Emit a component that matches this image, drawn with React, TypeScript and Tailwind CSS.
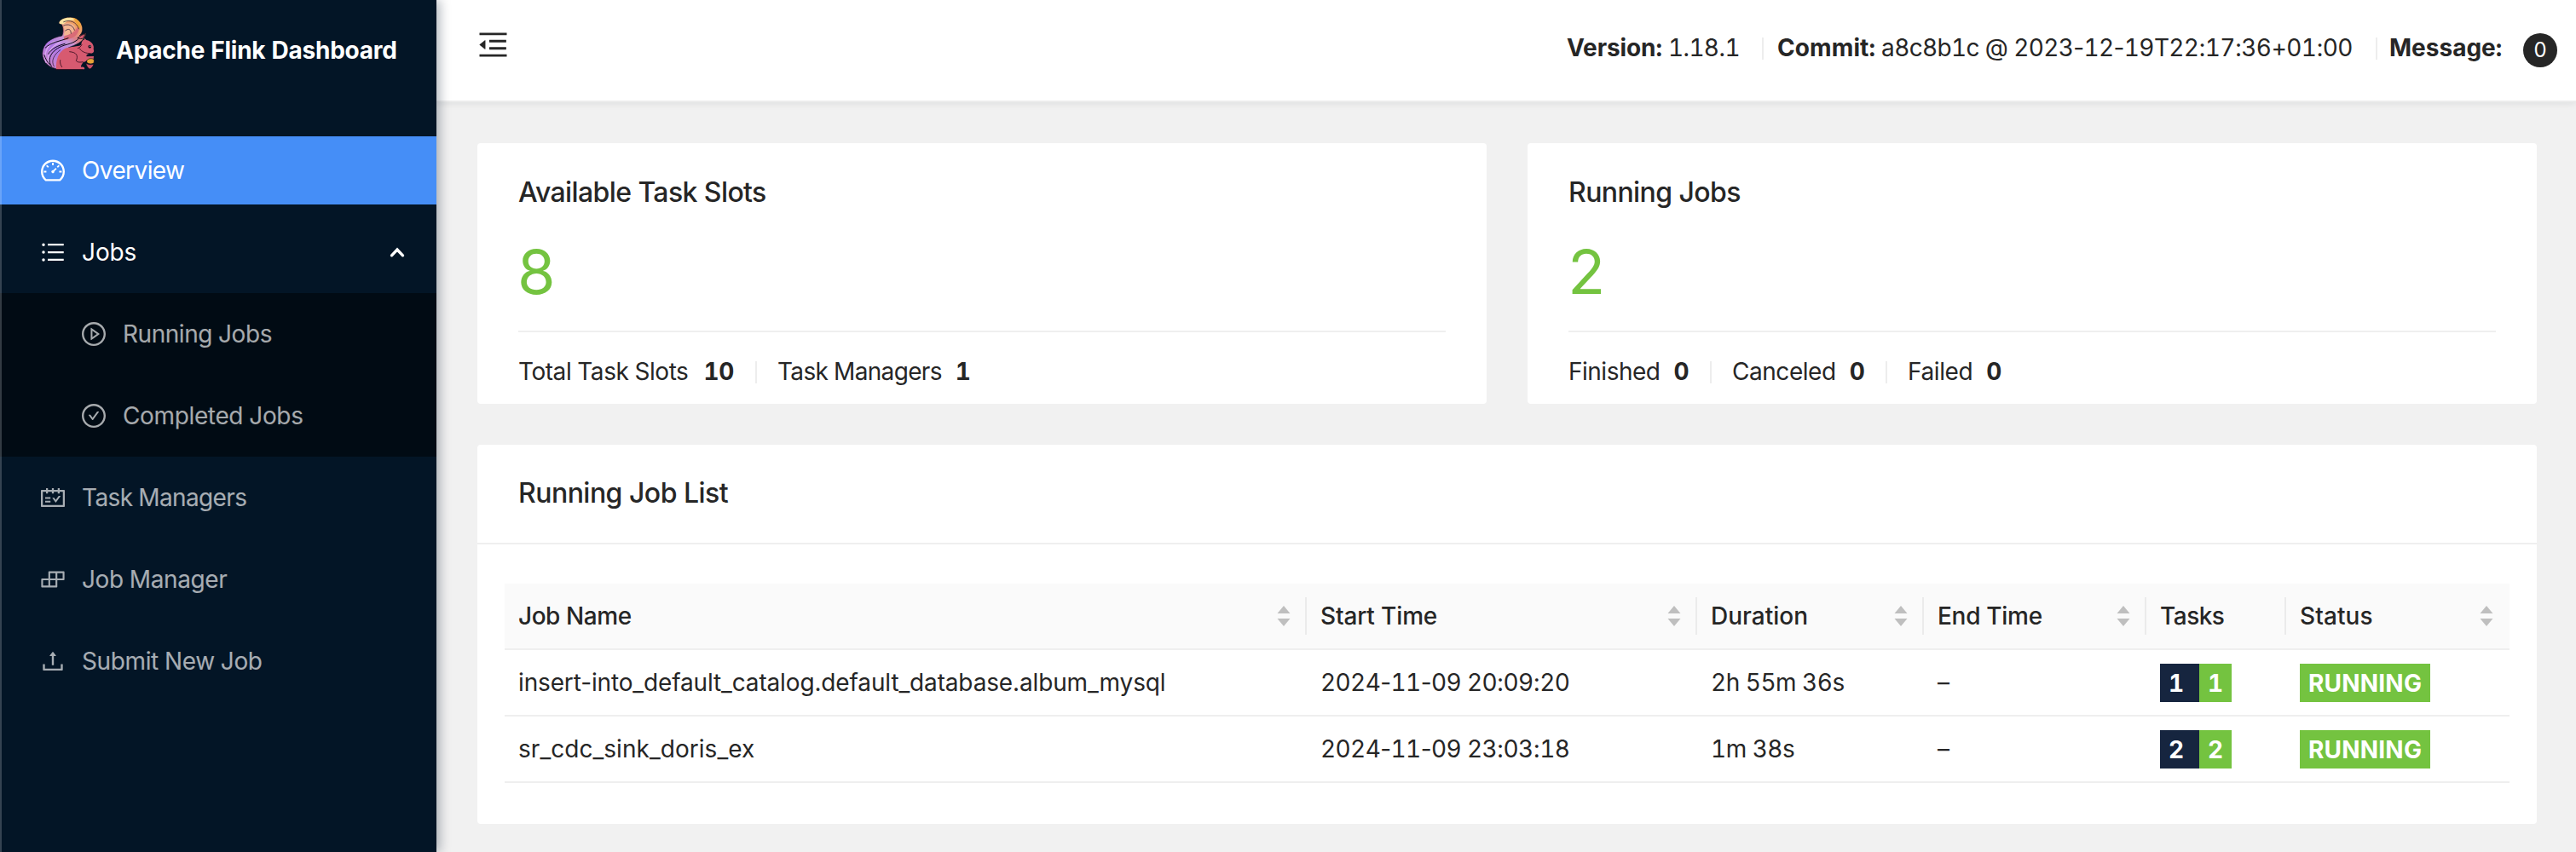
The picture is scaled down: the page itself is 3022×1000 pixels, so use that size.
import type { ComponentType, ReactNode } from "react";
import {
  AiOutlineBars,
  AiOutlineBuild,
  AiOutlineCheckCircle,
  AiOutlineDashboard,
  AiOutlineMenuFold,
  AiOutlinePlayCircle,
  AiOutlineSchedule,
  AiOutlineUpload,
} from "react-icons/ai";

type Icon = ComponentType<{ size?: number; className?: string }>;

/* Digits stay tabular while punctuation keeps its natural width. */
function Digits({ children }: { children: string }) {
  return (
    <>
      {children.split(/([-:.+]+)/).map((part, i) =>
        i % 2 ? (
          <span key={i} className="normal-nums">
            {part}
          </span>
        ) : (
          part
        ),
      )}
    </>
  );
}

function Squirrel() {
  return (
    <svg viewBox="54 24 192 198" className="h-[66px] w-16 shrink-0" fill="none" strokeLinecap="round" strokeLinejoin="round">
      <defs>
        <linearGradient id="tail" x1="190" y1="30" x2="75" y2="190" gradientUnits="userSpaceOnUse">
          <stop offset="0" stopColor="#eda43c" />
          <stop offset="0.2" stopColor="#f0a070" />
          <stop offset="0.36" stopColor="#dc7f88" />
          <stop offset="0.48" stopColor="#c595d8" />
          <stop offset="0.7" stopColor="#ae78e6" />
          <stop offset="1" stopColor="#c984d0" />
        </linearGradient>
      </defs>
      <path
        d="M118 52C118 44 126 38 135 35C165 24 192 36 199 62C203 76 198 88 190 95L213 86C208 112 188 124 160 134C135 143 118 165 120 214C82 211 59 188 59 158C60 122 90 103 128 96C134 84 133 68 126 54Z"
        fill="url(#tail)"
        stroke="#0c0a18"
        strokeWidth="2"
      />
      <path d="M118 52C120 38 140 30 165 33C177 35 184 42 181 46C165 38 148 41 138 52C132 57 124 57 118 52Z" fill="#fae3a0" />
      <path d="M165 32C180 34 190 46 195 62L186 75C181 58 178 45 165 32Z" fill="#eea33a" />
      <path d="M134 96C138 84 138 68 130 56C150 48 168 52 174 66C172 84 156 94 134 96Z" fill="#f3b592" />
      <path d="M136 98C160 92 176 82 182 64L188 76C182 98 162 108 134 112Z" fill="#d96b76" />
      <path d="M72 190C62 160 76 128 102 116M82 196C72 164 88 132 122 120" stroke="#d6a8ee" strokeWidth="4" />
      <path
        d="M92 204C72 180 90 140 148 126C172 120 186 110 194 96M80 160C92 140 112 132 138 124M70 138C90 118 120 116 150 104M66 164C70 178 76 188 86 198"
        stroke="#0c0a18"
        strokeWidth="3"
      />
      <path d="M134 60C152 52 168 60 172 76M140 78C152 68 160 74 160 88M134 47C156 37 180 48 188 72M100 204C88 184 100 162 122 146" stroke="#2a1430" strokeWidth="2.2" />
      <path
        d="M108 214C106 180 116 152 140 140C160 133 184 134 196 128C196 118 200 111 206 110L208 105L214 111C232 114 243 130 239 143C243 152 238 158 226 158C216 160 212 165 215 169L240 168L239 177L222 180C214 184 208 188 202 190C198 198 193 203 196 206C204 204 210 208 207 214Z"
        fill="#d75a70"
      />
      <path d="M155 152C180 154 186 166 178 184C182 190 192 190 202 188M190 141C198 153 212 158 228 158M198 128C194 134 190 138 184 140M122 182C120 192 124 200 128 206M108 215H200" stroke="#3a0f20" strokeWidth="2.6" />
      <path d="M184 103C194 95 202 92 210 88L204 104C198 108 190 108 184 103Z" fill="#d75a70" stroke="#0c0a18" strokeWidth="2.4" />
      <circle cx="226" cy="134" r="5.5" fill="#180d1a" />
      <circle cx="227.500" cy="132.500" r="1.800" fill="#fff" />
      <path d="M216 182C222 174 236 175 241 180V190C236 196 222 197 216 190Z" fill="#e9a537" stroke="#0c0a18" strokeWidth="2" />
      <path d="M212 192C220 198 232 199 240 195C237 206 230 213 225 213C220 211 214 202 212 192Z" fill="#c94f66" stroke="#0c0a18" strokeWidth="2" />
    </svg>
  );
}

function NavItem({ icon: I, label, active, open, sub, ls }: { icon: Icon; label: string; active?: boolean; open?: boolean; sub?: boolean; ls: string }) {
  return (
    <a
      className={`flex h-20 items-center ${sub ? "pl-[94px]" : "pl-[46px]"} ${active ? "bg-[#458ef7] text-white" : open ? "text-white" : "text-white/65"}`}
    >
      <I size={32} className="shrink-0" />
      <span className={`ml-[18px] ${ls}`}>{label}</span>
      {open && (
        <svg viewBox="0 0 20 14" className="mr-9 ml-auto h-3.5 w-5" fill="none" stroke="currentColor" strokeWidth="3.4" strokeLinecap="round">
          <path d="M3.500 10.800L10 4L16.500 10.800" />
        </svg>
      )}
    </a>
  );
}

function Divider() {
  return <span className="mt-0.5 h-[26px] w-0.5 shrink-0 bg-[#ededed]" />;
}

function Stat({ label, value, width, ls, gap }: { label: string; value: string; width: string; ls: string; gap: string }) {
  return (
    <div className={`flex items-center whitespace-nowrap ${width} ${gap}`}>
      <span className={ls}>{label}</span>
      <b className="font-bold tracking-[-0.3px]">{value}</b>
    </div>
  );
}

function SummaryCard({ title, value, children }: { title: string; value: string; children: ReactNode }) {
  return (
    <section className="h-[306px] flex-1 rounded bg-white px-12">
      <h2 className="pt-9 text-[32px]/[44px] font-medium tracking-[-0.6px]">{title}</h2>
      <div className="mt-[33px] -ml-0.5 text-[72px]/[76px] text-[#74c340]">{value}</div>
      <div className="mt-[31px] flex items-center border-t-2 border-[#efefef] pt-[27px] leading-[38px]">{children}</div>
    </section>
  );
}

function Sorter({ className }: { className: string }) {
  return (
    <svg viewBox="0 0 16 24" className={`ml-auto h-6 w-4 ${className}`} fill="#bfbfbf">
      <path d="M8 0L15.500 9H0.500ZM8 24L15.500 15H0.500Z" />
    </svg>
  );
}

const columns = [
  { label: "Job Name", ls: "tracking-[-0.45px]", sort: true, line: true },
  { label: "Start Time", ls: "tracking-[-0.15px]", sort: true, line: true },
  { label: "Duration", ls: "tracking-[0px]", sort: true, line: true },
  { label: "End Time", ls: "tracking-[-0.3px]", sort: true, line: true },
  { label: "Tasks", ls: "tracking-[-0.5px]", sort: false, line: true },
  { label: "Status", ls: "tracking-[0.1px]", sort: true, line: false },
];

const jobs = [
  { name: "insert-into_default_catalog.default_database.album_mysql", ls: "tracking-[-0.14px]", start: "2024-11-09 20:09:20", duration: "2h 55m 36s", tasks: "1" },
  { name: "sr_cdc_sink_doris_ex", ls: "tracking-[0.04px]", start: "2024-11-09 23:03:18", duration: "1m 38s", tasks: "2" },
];

const grid = "grid grid-cols-[941px_458px_266px_261px_164px_262px] items-center";

export default function App() {
  return (
    <div className="flex h-[1000px] w-[3022px] overflow-hidden bg-[#f1f1f1] font-[Inter,sans-serif] text-[28px] leading-[44px] text-[#262626] tabular-nums">
      <aside className="relative z-20 w-[512px] shrink-0 bg-[#031526] shadow-[4px_0_12px_rgba(0,21,41,0.3)]">
        <div className="flex h-[120px] pl-12">
          <div className="pt-[18px]">
            <Squirrel />
          </div>
          <h1 className="ml-6 pt-[37px] leading-[44px] font-bold tracking-[-0.26px] whitespace-nowrap text-white">Apache Flink Dashboard</h1>
        </div>
        <nav className="mt-10 flex flex-col gap-4">
          <NavItem icon={AiOutlineDashboard} label="Overview" ls="tracking-[-0.6px]" active />
          <div className="flex flex-col">
            <NavItem icon={AiOutlineBars} label="Jobs" ls="tracking-[-0.1px]" open />
            <div className="mt-2 flex flex-col gap-4 bg-[#010b14] py-2">
              <NavItem icon={AiOutlinePlayCircle} label="Running Jobs" ls="tracking-[-0.45px]" sub />
              <NavItem icon={AiOutlineCheckCircle} label="Completed Jobs" ls="tracking-[-0.36px]" sub />
            </div>
          </div>
          <div className="-mt-2 flex flex-col gap-4">
            <NavItem icon={AiOutlineSchedule} label="Task Managers" ls="tracking-[-0.63px]" />
            <NavItem icon={AiOutlineBuild} label="Job Manager" ls="tracking-[-0.4px]" />
            <NavItem icon={AiOutlineUpload} label="Submit New Job" ls="tracking-[-0.38px]" />
          </div>
        </nav>
        <div className="absolute inset-y-0 left-0 w-0.5 bg-white/20" />
      </aside>

      <div className="flex min-w-0 flex-1 flex-col">
        <header className="relative z-10 flex h-[120px] shrink-0 border-b-2 border-[#ececec] bg-white pl-[46px] shadow-[0_2px_8px_rgba(0,21,41,0.08)]">
          <AiOutlineMenuFold size={41} className="mt-8 shrink-0" />
          <div className="mr-[22px] ml-auto flex h-20 items-center pt-8 whitespace-nowrap">
            <div className="w-[229px]">
              <strong className="font-bold tracking-[-0.1px]">Version:</strong>
              <span className="ml-[7px] tracking-[-0.8px]">
                <Digits>1.18.1</Digits>
              </span>
            </div>
            <Divider />
            <div className="w-[718px] pl-4">
              <strong className="font-bold tracking-[0.1px]">Commit:</strong>
              <span className="ml-[7px] tracking-[-0.63px]">
                <Digits>a8c8b1c @ 2023-12-19T22:17:36+01:00</Digits>
              </span>
            </div>
            <Divider />
            <div className="flex w-[211px] items-center pl-3.5">
              <strong className="font-bold">Message:</strong>
              <span className="mt-1.5 ml-auto flex size-10 items-center justify-center rounded-full bg-[#262626] text-2xl leading-none text-white">0</span>
            </div>
          </div>
        </header>

        <main className="flex flex-1 flex-col gap-12 p-12 pr-[46px]">
          <div className="flex gap-12">
            <SummaryCard title="Available Task Slots" value="8">
              <Stat label="Total Task Slots" value="10" width="w-[278px]" ls="tracking-[-0.45px]" gap="gap-[18px]" />
              <Divider />
              <div className="w-6" />
              <Stat label="Task Managers" value="1" width="w-auto" ls="tracking-[-0.67px]" gap="gap-4" />
            </SummaryCard>
            <SummaryCard title="Running Jobs" value="2">
              <Stat label="Finished" value="0" width="w-[166px]" ls="tracking-[-0.5px]" gap="gap-4" />
              <Divider />
              <div className="w-6" />
              <Stat label="Canceled" value="0" width="w-[180px]" ls="tracking-[-0.45px]" gap="gap-4" />
              <Divider />
              <div className="w-6" />
              <Stat label="Failed" value="0" width="w-auto" ls="tracking-[-0.4px]" gap="gap-4" />
            </SummaryCard>
          </div>

          <section className="h-[445px] rounded bg-white">
            <h2 className="h-[117px] border-b-2 border-[#efefef] px-12 pt-[35px] text-[32px]/[44px] font-medium tracking-[-0.53px]">Running Job List</h2>
            <div className="mx-8 mt-[46px]">
              <div className={`h-[78px] border-b-2 border-[#efefef] bg-[#fafafa] font-medium ${grid}`}>
                {columns.map((c) => (
                  <div key={c.label} className={`flex h-11 items-center pl-4 ${c.line ? "border-r-2 border-[#ebebeb]" : ""}`}>
                    <span className={c.ls}>{c.label}</span>
                    {c.sort && <Sorter className={c.line ? "mr-[17px]" : "mr-[19px]"} />}
                  </div>
                ))}
              </div>
              {jobs.map((j) => (
                <div key={j.name} className={`h-[78px] border-b-2 border-[#efefef] *:pl-4 ${grid}`}>
                  <span className={`normal-nums ${j.ls}`}>{j.name}</span>
                  <span className="tracking-[-0.6px]">
                    <Digits>{j.start}</Digits>
                  </span>
                  <span className="tracking-[-0.5px]">{j.duration}</span>
                  <span>–</span>
                  <span className="flex font-bold text-white">
                    <span className="h-[45px] w-[46px] bg-[#16253f] pl-2.5 leading-[46px]">{j.tasks}</span>
                    <span className="h-[45px] w-[38px] bg-[#74c340] pl-2.5 leading-[46px]">{j.tasks}</span>
                  </span>
                  <span className="flex font-bold text-white">
                    <span className="h-[45px] w-[153px] bg-[#74c340] text-center leading-[46px] tracking-[0.2px]">RUNNING</span>
                  </span>
                </div>
              ))}
            </div>
          </section>
        </main>
      </div>
    </div>
  );
}
